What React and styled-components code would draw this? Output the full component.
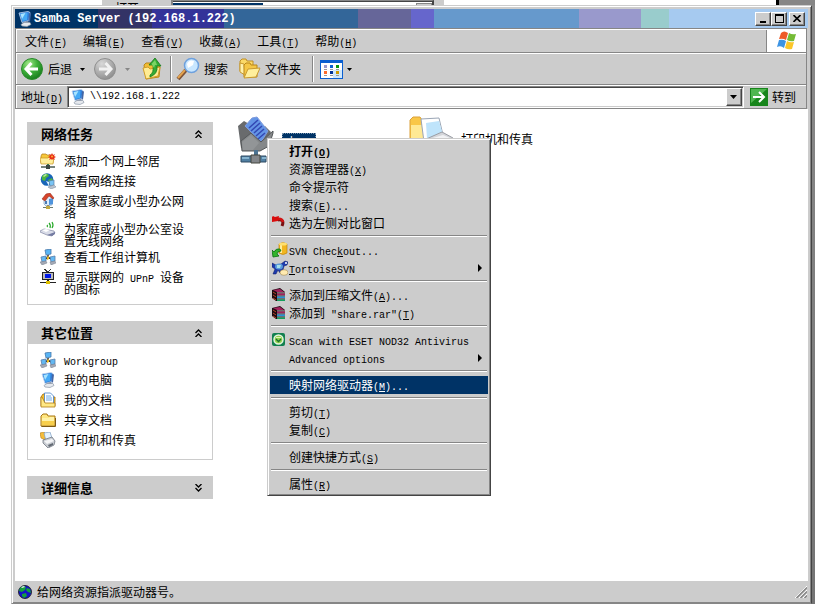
import React from "react";
import styled, { createGlobalStyle, css } from "styled-components";

const face = "#cccccc";
const shade = "#868686";
const dark = "#444444";
const navy = "#003366";
const cjk = `"Noto Sans CJK SC", sans-serif`;

const Global = createGlobalStyle`
  * { box-sizing: border-box; }
  html, body, #root { margin: 0; height: 100%; }
  body { font: 12px/12px ${cjk}; color: #000; background: #fff; overflow: hidden; }
  button, input { font: inherit; color: inherit; margin: 0; padding: 0; border: 0; background: none; border-radius: 0; }
  a { color: inherit; text-decoration: none; }
  h1, h2, p, ul { margin: 0; padding: 0; font: inherit; list-style: none; }
  svg { display: block; flex: none; }
`;

/* ---------- text ---------- */
const Latin = styled.span`
  font-family: "Liberation Mono", monospace;
  font-size: 10px;
  line-height: 0;
  white-space: pre-wrap;
`;
const Key = styled(Latin)`
  text-decoration: underline;
  text-underline-offset: 1px;
`;
// "&" marks the access key of a label, as in a resource file
function Text({ children }) {
  const parts = children.match(/&[ -~]|[ -%'-~]+|[^ -~]+/g);
  return (
    <span>
      {parts.map((p, i) =>
        p[0] === "&" ? <Key key={i}>{p[1]}</Key>
          : /^[ -~]/.test(p) ? <Latin key={i}>{p}</Latin> : p
      )}
    </span>
  );
}

/* ---------- icons ---------- */
const ComputerIcon = ({ size = 16 }) => (
  <svg width={size} height={size} viewBox="0 0 16 16">
    <path d="M2 2l9-1.500 2 1-1 8-7 2z" fill="#2f7fdc" stroke="#c3d6ee" strokeWidth=".8" />
    <path d="M3.500 3l7-1.200L10 9l-4.500 1z" fill="#45aaf6" />
    <path d="M3.500 3l5-.9L5 8z" fill="#a8e4ff" />
    <path d="M12 2l2 .5-1 8-1.500 0z" fill="#4466a4" />
    <path d="M6 11l5-1 1 2H7z" fill="#8593ab" />
    <path d="M4 13.500l3-2 6 0 1 2-4 2-5-.5z" fill="#e6e9ee" stroke="#8d98a8" strokeWidth=".7" />
  </svg>
);
const NetworkIcon = () => (
  <svg width="16" height="16" viewBox="0 0 16 16">
    <path d="M8 6v4M4 11l4-3 5 3" stroke="#222" strokeWidth="1.4" fill="none" />
    <path d="M7 8l2-1v3l-2 1z" fill="#e8b820" />
    <path d="M5 1l6-1v5l-5 1z" fill="#59b5f5" stroke="#4877a8" strokeWidth=".8" />
    <path d="M1 8l5-1v5l-4 1z" fill="#63b8f2" stroke="#5a7ea8" strokeWidth=".8" />
    <path d="M10 8l5-1v5l-4 1z" fill="#63b8f2" stroke="#5a7ea8" strokeWidth=".8" />
    <path d="M0 13l6-1 1 2-5 2zM10 13l5-1 1 2-5 2z" fill="#a4a9b5" stroke="#777e8c" strokeWidth=".5" />
  </svg>
);
const AddPlaceIcon = () => (
  <svg width="16" height="16" viewBox="0 0 16 16">
    <path d="M1 3l1-2h4l1 1h6v8H1z" fill="#f6c73a" stroke="#b07a12" strokeWidth=".7" />
    <path d="M0 5h8l1-1h5l-1 7H1z" fill="#ffef9c" stroke="#c99520" strokeWidth=".7" />
    <path d="M12 0l1 2 2-1-1 2 2 1-2 1 1 2-2-1-1 1-1-1-2 1 1-2-2-1 2-1-1-2 2 1z" fill="#e8301a" />
    <circle cx="12" cy="3.500" r="1" fill="#ffb02a" />
    <path d="M7 11h2v2H7z" fill="#3b7d4c" />
    <path d="M1 13h14v2H1z" fill="#76827c" /><path d="M6 12h4v4H6z" fill="#3d4843" />
  </svg>
);
const GlobeLinkIcon = () => (
  <svg width="16" height="16" viewBox="0 0 16 16">
    <circle cx="7" cy="6.500" r="6.300" fill="#1865b8" />
    <path d="M2 3q3-3 6-2l1 2-3 2-1 3-3-1zM8 7l4-2 1 3-3 3z" fill="#4eb53f" />
    <path d="M3 3q2-2 3-2l1 1-3 2z" fill="#b2e89c" />
    <path d="M9 8l5-1v5l-4 1z" fill="#79c4f5" stroke="#5c81a8" strokeWidth=".7" />
    <path d="M8 14l6-2 2 2-5 2z" fill="#b9c2ce" stroke="#76869a" strokeWidth=".5" />
    <path d="M6 8l3 1v4z" fill="#d9f0ff" />
  </svg>
);
const HomeNetIcon = () => (
  <svg width="16" height="16" viewBox="0 0 16 16">
    <path d="M4 6l5-4 4 4-1 6-6 1-2-2z" fill="#dcecfb" stroke="#6f90b5" strokeWidth=".6" />
    <path d="M9 6l4-1v6l-4 1z" fill="#4f94dd" />
    <path d="M2 6l4-5 4-1 4 5-1 1-4-3-4 5z" fill="#d6452c" stroke="#8d2415" strokeWidth=".5" />
    <path d="M5 8h2v3H5z" fill="#4b7cb5" />
    <path d="M7 12h2v2H7z" fill="#888" /><path d="M3 14h10v1H3z" fill="#6d7a6d" /><path d="M6 13h4v3H6z" fill="#c1a941" />
  </svg>
);
const WirelessIcon = () => (
  <svg width="16" height="16" viewBox="0 0 16 16">
    <path d="M7 4q1 1 0 2M9 2q2 2 1 5M12 1q2 3 0 6" stroke="#27a828" strokeWidth="1.200" fill="none" />
    <path d="M0 10l4-2 10 2 1 2-3 3-5-1-7-3z" fill="#d9dce8" stroke="#8187a4" strokeWidth=".7" />
    <path d="M7 14l8-3v2l-3 2z" fill="#747ba2" />
    <path d="M2 9l4-1 4 1-4 2z" fill="#fff" />
  </svg>
);
const UpnpIcon = () => (
  <svg width="16" height="16" viewBox="0 0 16 16" shapeRendering="crispEdges">
    <path d="M4 0l4 3 3-3" stroke="#333" fill="none" />
    <path d="M2 3h12v8H2z" fill="#222" /><path d="M3 4h10v6H3z" fill="#bbb" /><path d="M5 5h6v4H5z" fill="#0018e8" />
    <path d="M7 11h2v2H7zM0 13h16v1H0z" fill="#222" /><path d="M6 12h4v3H6z" fill="#dfc000" />
  </svg>
);
const DocsIcon = () => (
  <svg width="16" height="16" viewBox="0 0 16 16">
    <path d="M1 5l2-3h4v3h8v9H1z" fill="#f5bd2d" stroke="#a16d0c" strokeWidth=".8" />
    <path d="M4.500 1h6l3 3v8h-9z" fill="#fff" stroke="#407fca" strokeWidth=".8" />
    <path d="M6 4h5M6 6h6M6 8h6" stroke="#6aa8e8" />
    <path d="M1 5l1 0 3 6h10v4H1z" fill="#ffe885" stroke="#b17b13" strokeWidth=".8" />
  </svg>
);
const FolderIcon = () => (
  <svg width="16" height="16" viewBox="0 0 16 16">
    <path d="M1 4l2-2h4l1 2h7v10H1z" fill="#ffe680" stroke="#a8740f" />
    <path d="M2 6h7l1-1h4v8H2z" fill="#fff2a8" /><path d="M2 9h12v4H2z" fill="#f8cf4b" />
    <path d="M1.500 14.500h14V6" stroke="#7e5a13" fill="none" />
  </svg>
);
const PrinterIcon = () => (
  <svg width="16" height="16" viewBox="0 0 16 16">
    <path d="M0 1l4-1 2 2-1 6-4-2z" fill="#f5bd3a" stroke="#b27a18" strokeWidth=".6" />
    <path d="M4 1l6-1 2 6-6 3z" fill="#e5f3ff" stroke="#7a9cc0" strokeWidth=".7" />
    <path d="M3 8l9-3 3 4-1 4-6 3-5-5z" fill="#c8ccd2" stroke="#727983" strokeWidth=".8" />
    <path d="M4 9l8-2 2 2-7 3z" fill="#f4f5f7" /><path d="M8 13l5-2v2l-4 2z" fill="#626973" />
  </svg>
);
const BackIcon = () => (
  <svg width="22" height="22" viewBox="0 0 22 22">
    <defs><radialGradient id="bk" cx=".35" cy=".25" r=".8"><stop offset="0" stopColor="#a4e88a" /><stop offset=".5" stopColor="#3eb03a" /><stop offset="1" stopColor="#167a1c" /></radialGradient></defs>
    <circle cx="11" cy="11" r="10.500" fill="url(#bk)" stroke="#2b8a2c" />
    <path d="M10.500 5L5 11l5.500 6M6 11h11" fill="none" stroke="#fff" strokeWidth="3" />
  </svg>
);
const ForwardIcon = () => (
  <svg width="22" height="22" viewBox="0 0 22 22">
    <defs><radialGradient id="fw" cx=".35" cy=".25" r=".8"><stop offset="0" stopColor="#d8d8d8" /><stop offset="1" stopColor="#8c8c8c" /></radialGradient></defs>
    <circle cx="11" cy="11" r="10.500" fill="url(#fw)" stroke="#8f8f8f" />
    <path d="M11.500 5l5.500 6-5.500 6M16 11H5" fill="none" stroke="#f1f1f1" strokeWidth="3" />
  </svg>
);
const UpIcon = () => (
  <svg width="22" height="22" viewBox="0 0 22 22">
    <path d="M3 7l2-2h5l1 2h6l2 2-1 10-13 2z" fill="#f2bd35" stroke="#bb8719" />
    <path d="M2 10l5-1 2 2 10-2-2 9-12 3z" fill="#ffec94" stroke="#cf9d2a" />
    <path d="M9 17q4-2 3-10l-4 0 6-7 6 8h-4q1 8-7 11z" fill="#35ac35" stroke="#177817" strokeWidth=".8" />
    <path d="M10.500 6l3.500-4 2 5-2 0-1 3z" fill="#7cd465" />
  </svg>
);
const SearchIcon = () => (
  <svg width="24" height="24" viewBox="0 0 24 24">
    <path d="M2 22l8-9" stroke="#7c5136" strokeWidth="4" /><path d="M2 21l7-8" stroke="#e3a24d" strokeWidth="2" />
    <circle cx="15.500" cy="8.500" r="7" fill="#c9e7ff" stroke="#6fa1dd" strokeWidth="1.500" />
    <path d="M11 7q2-5 7-3l-1 4-5 3z" fill="#fff" />
  </svg>
);
const FoldersIcon = () => (
  <svg width="22" height="22" viewBox="0 0 22 22">
    <path d="M1 3l2-2h4l1 2h6v10H1z" fill="#fbd968" stroke="#c08e22" />
    <path d="M1 5l4 1 1 11-5-3z" fill="#fff1ac" stroke="#c99a2e" />
    <path d="M5 7l2-2h4l1 2h6v12H5z" fill="#f5c746" stroke="#bb8719" />
    <path d="M5 20L9 11l12-1-4 9z" fill="#ffef9c" stroke="#c99a2e" />
  </svg>
);
const ViewsIcon = () => (
  <svg width="23" height="19" viewBox="0 0 23 19" shapeRendering="crispEdges">
    <path d="M0 0h23v19H0z" fill="#0a5fd0" /><path d="M1 3h21v15H1z" fill="#fff" /><path d="M13 10h9v8h-9z" fill="#cfe7fb" />
    {[["#9999cc", 4, 5], ["#0a5fd0", 10, 5], ["#0a960a", 16, 5], ["#ff6a2a", 4, 11], ["#003399", 10, 11], ["#cc9900", 16, 11]].map(([c, x, y]) => (
      <g key={c}><path d={`M${x} ${y}h3v3h-3z`} fill={c} /><path d={`M${x} ${y + 4}h3v1h-3z`} fill="#999" /></g>
    ))}
  </svg>
);
const FlagIcon = () => (
  <svg width="21" height="20" viewBox="0 0 21 20">
    <path d="M5 2q3-3 7 0l-2 7q-3-2-7-1z" fill="#ee5a26" />
    <path d="M13 2q3 2 7 1l-2 7q-4 1-7-1z" fill="#74bb35" />
    <path d="M3 9q4-1 7 1l-2 7q-3-3-7-1z" fill="#3d94e4" />
    <path d="M11 10q3 2 7 1l-2 7q-4 1-7-1z" fill="#fbc62a" />
  </svg>
);
const GoIcon = () => (
  <svg width="18" height="18" viewBox="0 0 18 18">
    <path d="M0 0h18v18H0z" fill="#17851b" /><path d="M1 1h16L1 15z" fill="#4fb64f" />
    <path d="M3 9h11M9 4l5 5-5 5" stroke="#fff" strokeWidth="2" fill="none" />
  </svg>
);
const Down = ({ color = "#000" }) => (
  <svg width="5" height="3" viewBox="0 0 5 3"><path d="M0 0h5L2.500 3z" fill={color} /></svg>
);
const RightMark = () => (
  <svg width="4" height="8" viewBox="0 0 4 8"><path d="M0 0l4 4-4 4z" fill="currentColor" /></svg>
);
const Chevrons = ({ down }) => (
  <svg width="7" height="8" viewBox="0 0 7 8">
    <path d={down ? "M.5 0l3 3 3-3M.5 4l3 3 3-3" : "M.5 4l3-3 3 3M.5 8l3-3 3 3"} stroke="#000" strokeWidth="1.300" fill="none" />
  </svg>
);
const MinGlyph = () => <svg width="9" height="8" viewBox="0 0 9 8"><path d="M1 6h6v2H1z" /></svg>;
const MaxGlyph = () => <svg width="9" height="9" viewBox="0 0 9 9"><path d="M0 0h9v9H0zM1 2v6h7V2z" fillRule="evenodd" /></svg>;
const CloseGlyph = () => <svg width="8" height="7" viewBox="0 0 8 7"><path d="M.5 0l7 7M7.500 0l-7 7" stroke="#000" strokeWidth="1.600" /></svg>;
const Grip = () => (
  <svg width="12" height="12" viewBox="0 0 12 12">
    <path d="M0 12L12 0M4 12l8-8M8 12l4-4" stroke="#fff" />
    <path d="M1.500 12L12 1.500M5.500 12L12 5.500M9.500 12L12 9.500" stroke="#868686" strokeWidth="1.500" />
  </svg>
);
const EarthIcon = () => (
  <svg width="14" height="14" viewBox="0 0 14 14">
    <circle cx="7" cy="7" r="6.500" fill="#1414c8" stroke="#111" strokeWidth=".8" />
    <path d="M2 3l3-2 3 1-1 3-3 2-3-1zM9 3l3 1 1 4-3-1-2-2zM4 9l4-1 1 3-3 2-2-2z" fill="#14a03c" />
    <path d="M3 2l3-1 1 1-3 1z" fill="#e4f4e4" />
  </svg>
);
const ShareIcon = () => (
  <svg width="48" height="48" viewBox="0 0 48 48">
    <path d="M6 10l6-5 5 3 16 2 6 6-8 16H9z" fill="#696b6d" />
    <path d="M13 10L20 2l5-1 11 14-7 11z" fill="#6495e6" stroke="#7f9bdc" />
    <path d="M17 12l9-8M19 15l9-8M22 17l8-7M24 20l8-7M26 23l7-6" stroke="#3348b4" strokeWidth="1.500" />
    <path d="M9 25l10-8 10 9 12-11 0 2-4 13-9 5H10z" fill="#85888a" stroke="#55585a" />
    <path d="M10 26l9-7 8 8-6 7H11z" fill="#929597" />
    <path d="M22 34h4v6h-4z" fill="#4c7392" />
    <path d="M9 40h25v6H9z" fill="#507fa2" stroke="#2e4a63" />
    <path d="M19 39h9v8h-9z" fill="#83868a" stroke="#44463e" /><path d="M10 41h7v2h-7zM30 41h4v2h-4z" fill="#86b4d0" />
  </svg>
);
const PrinterFolderIcon = () => (
  <svg width="48" height="48" viewBox="0 0 48 48">
    <path d="M1 4l3-3h7l2 3h5v24H1z" fill="#f9c748" stroke="#dba13a" />
    <path d="M2 9h14v22H2z" fill="#ffe994" />
    <path d="M12 3l18-1 4 17-19 7z" fill="#fff" stroke="#9aa5b5" />
    <path d="M17 7l13-2 4 14-16 4z" fill="#bfe4fb" />
    <path d="M15 24l18-8 11 6-2 10-16 5z" fill="#d4d6da" stroke="#9a9da4" />
    <path d="M17 24l17-5 7 3-16 6z" fill="#f1f2f4" />
  </svg>
);
const UndoIcon = () => (
  <svg width="16" height="16" viewBox="0 0 16 16">
    <path d="M6 5q7-1 4 6" stroke="#7a1010" strokeWidth="3" fill="none" />
    <path d="M5 4q5-1 6 3" stroke="#d21212" strokeWidth="2.500" fill="none" />
    <path d="M0 2l1-1 2 1 4-1-1 5-6 1z" fill="#d80d0d" />
  </svg>
);
const CheckoutIcon = () => (
  <svg width="16" height="16" viewBox="0 0 16 16">
    <path d="M7 2q4-3 8 0v9q-4 3-8 0z" fill="#f2b61f" stroke="#bd8512" strokeWidth=".7" />
    <path d="M8 3h2v8H8z" fill="#ffec9c" /><ellipse cx="11" cy="2" rx="4" ry="1.500" fill="#ffe070" />
    <path d="M0 8l2 2q2-4 6-3l1 2q-4 0-4 3l2 2-6 1z" fill="#32b52c" stroke="#0b6e10" strokeWidth=".8" />
  </svg>
);
const TortoiseIcon = () => (
  <svg width="16" height="16" viewBox="0 0 16 16">
    <path d="M0 3l4 2 5-1 4-3 3 1-1 3-3 1-1 4 1 3H8l-2-3-2 4H1l2-5-3-2z" fill="#1d3bae" stroke="#0b1761" strokeWidth=".5" />
    <ellipse cx="7" cy="6.500" rx="4" ry="3" fill="#5a9bdc" /><path d="M5 5l4 0-1 3-3 0z" fill="#a6e0e8" />
    <circle cx="14" cy="3" r="1" fill="#fff" />
    <ellipse cx="12" cy="12.500" rx="4" ry="2.800" fill="#ffeab0" stroke="#a58b52" strokeWidth=".6" />
  </svg>
);
const RarIcon = () => (
  <svg width="16" height="16" viewBox="0 0 16 16">
    <path d="M0 3l8-2 5 4v9H4l-4-3z" fill="#1c0a10" />
    <path d="M1 3l7-1 4 3H5z" fill="#a3215c" />
    <path d="M5 6h8M5 9h8M5 12h8" stroke="#fff" strokeWidth=".8" />
    <path d="M5 7.300h8" stroke="#a3215c" strokeWidth="1.600" />
    <path d="M5 10.300h8" stroke="#2494d8" strokeWidth="1.600" />
    <path d="M5 13.200h8" stroke="#16a860" strokeWidth="1.500" />
    <path d="M1 5l3 2M1 8l3 2M1 11l3 2" stroke="#b8452a" />
  </svg>
);
const EsetIcon = () => (
  <svg width="16" height="16" viewBox="0 0 16 16">
    <rect x="0" y="1" width="13" height="13" rx="2" fill="#128050" />
    <circle cx="6.500" cy="7.500" r="4.500" fill="#8fd04c" stroke="#e6f7e0" strokeWidth="1.500" />
    <path d="M4 7l2.500 2.500L9 7" stroke="#17702d" strokeWidth="1.300" fill="none" /><path d="M4 5h5v1H4z" fill="#d9f5b8" />
  </svg>
);

/* ---------- desktop ---------- */
const Desktop = styled.div`
  display: flex; flex-direction: column; height: 100vh; min-height: 600px; background: #fff;
`;
const Behind = styled.div`
  display: flex; height: 5px; flex: none; overflow: hidden; padding-left: 102px;
`;
const RunDialog = styled.div`
  display: flex; width: 342px; background: ${face}; padding: 0 10px 0 13px;
`;
const RunLabel = styled.span`width: 56px; padding-top: 2px;`;
const RunField = styled.div`
  flex: 1; height: 20px; display: flex; justify-content: space-between;
  border: solid ${shade}; border-width: 1px 2px; border-right-color: ${dark}; background: #fff;
  box-shadow: inset 0 1px ${dark};
`;
const RunValue = styled.span`height: 16px; margin-top: 2px; background: ${navy}; color: #fff;`;
const RunArrow = styled.span`width: 16px; margin-top: 2px; border: 1px solid ${shade}; background: ${face};`;
const Ledge = styled.div`flex: 1;`;
const Edge = styled.div`width: 39px; border-left: 3px solid #000; background: ${shade};`;
const Stage = styled.div`
  flex: 1; min-height: 0; display: flex; padding-left: 11px;
`;
const Gutter = styled.div`width: 3px; background: linear-gradient(#8a8a8a, #747474);`;

/* ---------- window ---------- */
const Window = styled.main`
  flex: 1; display: flex; flex-direction: column; background: ${face};
  border: solid; border-width: 1px; border-color: ${face} ${dark} ${shade} ${face};
  box-shadow: inset 1px 1px #fff, inset -1px -1px ${shade};
  padding: 3px 3px 1px;
`;
const TitleBar = styled.header`
  height: 19px; flex: none; display: flex; align-items: center; padding: 0 3px 0 2px; color: #fff;
  background: linear-gradient(to right,
    #003366 0 10.5%, #333366 0 17.3%, #333399 0 26.4%, #336699 0 43.2%, #666699 0 49.9%,
    #6666cc 0 52.8%, #6699cc 0 71.1%, #9999cc 0 79%, #99cccc 0 82.5%, #a6caf0 0);
`;
const Title = styled.h1`
  flex: 1; padding-left: 1px; font: bold 12px/18px "Liberation Mono", monospace;
`;
const raised = css`
  background: ${face};
  border: 1px solid; border-color: #fff ${dark} ${dark} #fff;
  box-shadow: inset -1px -1px ${shade};
  display: flex; align-items: center; justify-content: center;
`;
const CaptionButton = styled.button`
  ${raised} width: 16px; height: 14px; margin-left: ${(p) => (p.$apart ? "2px" : "0")};
`;
const Rebar = styled.div`
  flex: none; border: 1px solid ${shade}; margin-right: 1px;
`;
const Band = styled.div`
  display: flex; align-items: center; height: ${(p) => p.$height}px;
  border: solid #fff; border-width: 1px 0 0 1px;
  & + & { box-shadow: 0 -1px ${shade}; margin-top: 1px; }
`;
const MenuButton = styled.button`height: 22px; padding: 0 8px;`;
const Brand = styled.div`
  align-self: stretch; width: 40px; margin-left: auto; background: #fff; border-left: 1px solid ${shade};
  display: flex; align-items: center; justify-content: center;
`;
const ToolButton = styled.button`
  display: flex; align-items: center; height: 28px; gap: ${(p) => p.$gap || 4}px; padding: 0 ${(p) => p.$pad ?? 4}px;
`;
const Divider = styled.div`
  width: 2px; height: 26px; margin-right: 4px; background: linear-gradient(to right, ${shade} 50%, #fff 50%);
`;
const AddressLabel = styled.label`padding: 0 4px;`;
const Combo = styled.div`
  flex: 1; height: 22px; display: flex; align-items: center; background: #fff; padding-left: 2px;
  border: 1px solid; border-color: ${shade} #fff #fff ${shade};
  box-shadow: inset 1px 1px ${dark}, inset -1px -1px ${face};
`;
const AddressInput = styled.input`
  flex: 1; min-width: 0; height: 16px; padding-left: 4px; outline: 0;
  font: 10px/16px "Liberation Mono", monospace;
`;
const ComboArrow = styled.button`${raised} width: 16px; height: 18px; margin-right: 1px;`;
const GoButton = styled.button`
  display: flex; align-items: center; gap: 4px; padding: 0 10px 0 6px; height: 22px;
`;

/* ---------- client area ---------- */
const Client = styled.div`
  flex: 1; min-height: 0; position: relative; display: flex; background: #fff; padding: 0 12px;
`;
const Sidebar = styled.aside`
  width: 186px; flex: none; display: flex; flex-direction: column; gap: 16px; padding-top: 13px;
`;
const Panel = styled.section`
  border: solid ${face}; border-width: ${(p) => (p.$open ? "0 1px 1px" : "0")};
`;
const PanelHead = styled.button`
  display: flex; width: ${(p) => (p.$open ? "calc(100% + 2px)" : "100%")}; height: 23px;
  margin: 0 ${(p) => (p.$open ? -1 : 0)}px; align-items: center; justify-content: space-between;
  padding: 0 11px 0 14px; background: ${face}; font: bold 13px/13px ${cjk};
`;
const Tasks = styled.ul`padding: 8px 22px 7px 12px;`;
const Task = styled.li`min-height: 20px;`;
const TaskLink = styled.a`
  display: flex; align-items: flex-start; gap: 8px;
  & > span { padding: 2px 0; }
`;
const Files = styled.div`
  display: grid; grid-template-columns: repeat(auto-fill, 177px); align-content: start;
  flex: 1; padding: 7px 0 0 19px;
`;
const FileTile = styled.a`display: flex; align-items: center; gap: 2px; height: 48px;`;
const FileName = styled.span`
  padding: 0 2px; margin-bottom: 2px;
  ${(p) => p.$selected && css`background: ${navy}; color: #fff; outline: 1px dotted #7a94ae; outline-offset: -1px;`}
`;
const Popup = styled.div`
  position: absolute; left: 252px; top: 29px; width: 224px; background: ${face};
  border: 1px solid; border-color: ${face} ${dark} ${dark} ${face};
  box-shadow: inset 1px 1px #fff, inset -1px -1px ${shade};
  padding: 3px 2px 2px;
`;
const PopupItem = styled.button`
  display: grid; grid-template-columns: 16px 1fr 10px; column-gap: 1px; align-items: center;
  width: 100%; height: 18px; padding-left: 2px; text-align: left;
  font-weight: ${(p) => (p.$default ? "bold" : "normal")};
  background: ${(p) => (p.$active ? navy : "transparent")};
  color: ${(p) => (p.$active ? "#fff" : "#000")};
`;
const Rule = styled.hr`
  height: 2px; margin: 3px 1px 4px; border: solid; border-width: 1px 0; border-color: ${shade} #fff #fff;
`;
const StatusBar = styled.footer`
  flex: none; height: 21px; display: flex; align-items: center; gap: 5px; padding: 0 1px 0 3px;
`;
const StatusText = styled.p`flex: 1;`;

const menus = ["文件(&F)", "编辑(&E)", "查看(&V)", "收藏(&A)", "工具(&T)", "帮助(&H)"];
const networkTasks = [
  [AddPlaceIcon, "添加一个网上邻居"],
  [GlobeLinkIcon, "查看网络连接"],
  [HomeNetIcon, "设置家庭或小型办公网络"],
  [WirelessIcon, "为家庭或小型办公室设置无线网络"],
  [NetworkIcon, "查看工作组计算机"],
  [UpnpIcon, "显示联网的 UPnP 设备的图标"],
];
const otherPlaces = [
  [NetworkIcon, "Workgroup"],
  [ComputerIcon, "我的电脑"],
  [DocsIcon, "我的文档"],
  [FolderIcon, "共享文档"],
  [PrinterIcon, "打印机和传真"],
];
const popupGroups = [
  [{ text: "打开(&O)", isDefault: true }, { text: "资源管理器(&X)" }, { text: "命令提示符" }, { text: "搜索(&E)..." }, { text: "选为左侧对比窗口", Icon: UndoIcon }],
  [{ text: "SVN Chec&kout...", Icon: CheckoutIcon }, { text: "&TortoiseSVN", Icon: TortoiseIcon, sub: true }],
  [{ text: "添加到压缩文件(&A)...", Icon: RarIcon }, { text: '添加到 "share.rar"(&T)', Icon: RarIcon }],
  [{ text: "Scan with ESET NOD32 Antivirus", Icon: EsetIcon }, { text: "Advanced options", sub: true }],
  [{ text: "映射网络驱动器(&M)...", active: true }],
  [{ text: "剪切(&T)" }, { text: "复制(&C)" }],
  [{ text: "创建快捷方式(&S)" }],
  [{ text: "属性(&R)" }],
];

function SidePanel({ title, items }) {
  const open = Boolean(items);
  return (
    <Panel $open={open}>
      <h2><PanelHead $open={open} aria-expanded={open}>{title}<Chevrons down={!open} /></PanelHead></h2>
      {open && (
        <Tasks>
          {items.map(([Icon, text]) => (
            <Task key={text}><TaskLink href="#"><Icon /><Text>{text}</Text></TaskLink></Task>
          ))}
        </Tasks>
      )}
    </Panel>
  );
}

function ContextMenu() {
  return (
    <Popup role="menu">
      {popupGroups.map((group, g) => (
        <React.Fragment key={g}>
          {g > 0 && <Rule />}
          {group.map(({ text, Icon, isDefault, active, sub }) => (
            <PopupItem key={text} role="menuitem" $default={isDefault} $active={active}>
              {Icon ? <Icon /> : <i />}
              <Text>{text}</Text>
              {sub && <RightMark />}
            </PopupItem>
          ))}
        </React.Fragment>
      ))}
    </Popup>
  );
}

export default function App() {
  return (
    <>
      <Global />
      <Desktop>
        <Behind>
          <RunDialog>
            <RunLabel><Text>打开(&O):</Text></RunLabel>
            <RunField><RunValue><Text>{"\\\\192.168.1.222"}</Text></RunValue><RunArrow /></RunField>
          </RunDialog>
          <Ledge />
          <Edge />
        </Behind>
        <Stage>
          <Window>
            <TitleBar>
              <ComputerIcon />
              <Title>Samba Server (192.168.1.222)</Title>
              <CaptionButton aria-label="最小化"><MinGlyph /></CaptionButton>
              <CaptionButton aria-label="最大化"><MaxGlyph /></CaptionButton>
              <CaptionButton aria-label="关闭" $apart><CloseGlyph /></CaptionButton>
            </TitleBar>
            <Rebar>
              <Band $height={23} as="nav">
                {menus.map((m) => <MenuButton key={m}><Text>{m}</Text></MenuButton>)}
                <Brand><FlagIcon /></Brand>
              </Band>
              <Band $height={31}>
                <ToolButton $gap={5}><BackIcon />后退</ToolButton>
                <ToolButton aria-label="后退列表"><Down /></ToolButton>
                <ToolButton aria-label="前进" $pad={5}><ForwardIcon /></ToolButton>
                <ToolButton aria-label="前进列表"><Down color="#868686" /></ToolButton>
                <ToolButton aria-label="向上" $pad={7}><UpIcon /></ToolButton>
                <Divider />
                <ToolButton $pad={0}><SearchIcon />搜索</ToolButton>
                <ToolButton $pad={11}><FoldersIcon />文件夹</ToolButton>
                <Divider />
                <ToolButton aria-label="查看" $pad={2}><ViewsIcon /><Down /></ToolButton>
              </Band>
              <Band $height={23}>
                <AddressLabel htmlFor="address"><Text>地址(&D)</Text></AddressLabel>
                <Combo>
                  <ComputerIcon />
                  <AddressInput id="address" defaultValue={"\\\\192.168.1.222"} />
                  <ComboArrow aria-label="地址列表"><svg width="7" height="4" viewBox="0 0 7 4"><path d="M0 0h7L3.500 4z" /></svg></ComboArrow>
                </Combo>
                <GoButton><GoIcon />转到</GoButton>
              </Band>
            </Rebar>
            <Client>
              <Sidebar>
                <SidePanel title="网络任务" items={networkTasks} />
                <SidePanel title="其它位置" items={otherPlaces} />
                <SidePanel title="详细信息" />
              </Sidebar>
              <Files>
                <FileTile href="#"><ShareIcon /><FileName $selected><Text>share</Text></FileName></FileTile>
                <FileTile href="#"><PrinterFolderIcon /><FileName>打印机和传真</FileName></FileTile>
              </Files>
              <ContextMenu />
            </Client>
            <StatusBar>
              <EarthIcon />
              <StatusText>给网络资源指派驱动器号。</StatusText>
              <Grip />
            </StatusBar>
          </Window>
          <Gutter />
        </Stage>
      </Desktop>
    </>
  );
}
